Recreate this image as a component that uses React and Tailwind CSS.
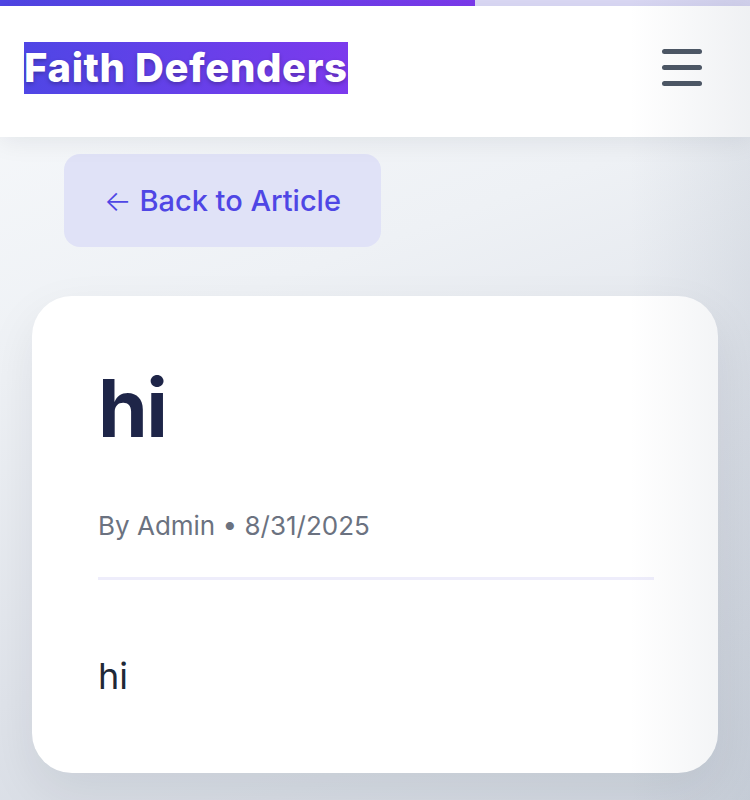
import React from "react";

export default function App() {
  return (
    <div
      className="relative min-h-[800px] w-full overflow-hidden bg-[linear-gradient(160deg,#f8fafc_0%,#eef1f5_35%,#dfe3ea_65%,#cfd5de_100%)]"
      style={{ fontFamily: "Inter, 'Noto Sans', sans-serif" }}
    >
      {/* progress bar */}
      <div className="h-[6px] w-full bg-[#dcdaf6]">
        <div className="h-full w-[475px] bg-[linear-gradient(90deg,#4f46e5,#7c3aed)]" />
      </div>

      {/* header */}
      <header className="relative z-10 flex h-[131px] items-center justify-between bg-white pb-2 pl-6 pr-12 shadow-[0_4px_24px_rgba(15,23,42,0.08)]">
        <span className="bg-[linear-gradient(90deg,#4f46e5,#7c3aed)] text-[40px] font-extrabold leading-[52px] tracking-[0.015em] text-white [text-shadow:0_2px_4px_rgba(0,0,0,0.25)]">
          Faith Defenders
        </span>
        <button className="flex flex-col gap-[11px]">
          <span className="block h-[5px] w-10 rounded-full bg-[#4b5563]" />
          <span className="block h-[5px] w-10 rounded-full bg-[#4b5563]" />
          <span className="block h-[5px] w-10 rounded-full bg-[#4b5563]" />
        </button>
      </header>

      <main className="px-8 pb-10">
        <div className="pl-8 pt-[17px]">
          <button className="rounded-2xl bg-[#e0e2f7] px-10 py-6 text-[29px] font-medium leading-[45px] text-[#4f46e5]">
            <span className="font-light">←</span> Back to Article
          </button>
        </div>

        <article className="mt-[49px] rounded-[40px] bg-white pb-16 pl-[66px] pr-16 pt-16 shadow-[0_20px_50px_rgba(15,23,42,0.08)]">
          <h1 className="mb-[50px] text-[80px] font-bold leading-[96px] tracking-[-0.02em] text-[#1e2548]">
            hi
          </h1>
          <div className="border-b-[3px] border-[#eeedfb] pb-8 text-[26px] leading-[39px] text-[#6b7280]">
            By Admin • 8/31/2025
          </div>
          <div className="mt-16 text-[36px] leading-[64.8px] text-[#1f2937]">hi</div>
        </article>
      </main>

      {/* right-side vignette */}
      <div className="pointer-events-none absolute inset-y-0 right-0 z-20 w-[120px] bg-[linear-gradient(90deg,rgba(100,116,139,0),rgba(100,116,139,0.1))]" />
    </div>
  );
}
